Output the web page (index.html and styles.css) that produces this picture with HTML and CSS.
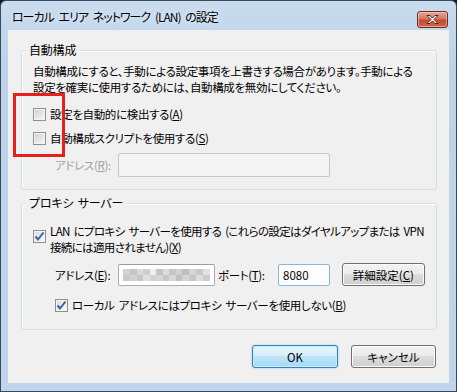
FILE: index.html
```html
<!DOCTYPE html>
<html lang="ja">
<head>
  <meta charset="UTF-8">
  <title>ローカル エリア ネットワーク (LAN) の設定</title>
  <link rel="stylesheet" href="styles.css">
</head>
<body>
  <div class="window">
    <div class="titlebar">
      <span class="title">ローカル エリア ネットワーク (LAN) の設定</span>
      <button class="close" aria-label="閉じる">
        <svg width="15" height="11" viewBox="0 0 15 11">
          <path d="M2 1.5h3l2.5 2.6 2.5-2.6h3l-4 4 4 4h-3l-2.5-2.6-2.5 2.6h-3l4-4z" fill="#fff" stroke="#5b1e12" stroke-width="1"/>
        </svg>
      </button>
    </div>

    <div class="client">
      <div class="group group-auto">
        <div class="group-title">自動構成</div>
        <p class="desc">自動構成にすると、手動による設定事項を上書きする場合があります。手動による<br>設定を確実に使用するためには、自動構成を無効にしてください。</p>
        <label class="check check-first"><span class="box"></span><span>設定を自動的に検出する(<u>A</u>)</span></label>
        <label class="check check-second"><span class="box"></span><span>自動構成スクリプトを使用する(<u>S</u>)</span></label>
        <div class="field-row field-script">
          <span class="field-label disabled">アドレス(<u>R</u>):</span>
          <span class="textbox textbox-disabled"></span>
        </div>
      </div>

      <div class="group group-proxy">
        <div class="group-title">プロキシ サーバー</div>
        <label class="check check-proxy">
          <span class="box checked">
            <svg width="11" height="11" viewBox="0 0 11 11"><path d="M1.5 5.5l2.5 3 5.5-7" fill="none" stroke="#3f5f9f" stroke-width="2"/></svg>
          </span>
          <span>LAN にプロキシ サーバーを使用する (これらの設定はダイヤルアップまたは VPN<br>接続には適用されません)(<u>X</u>)</span>
        </label>
        <div class="field-row field-proxy">
          <span class="field-label">アドレス(<u>E</u>):</span>
          <span class="textbox textbox-address"><span class="blur"></span></span>
          <span class="field-label port-label">ポート(<u>T</u>):</span>
          <span class="textbox textbox-port">8080</span>
          <button class="btn btn-advanced">詳細設定(<u>C</u>)</button>
        </div>
        <label class="check check-local">
          <span class="box checked">
            <svg width="11" height="11" viewBox="0 0 11 11"><path d="M1.5 5.5l2.5 3 5.5-7" fill="none" stroke="#3f5f9f" stroke-width="2"/></svg>
          </span>
          <span>ローカル アドレスにはプロキシ サーバーを使用しない(<u>B</u>)</span>
        </label>
      </div>

      <div class="actions">
        <button class="btn btn-default">OK</button>
        <button class="btn">キャンセル</button>
      </div>

      <div class="highlight"></div>
    </div>
  </div>
</body>
</html>
```

FILE: styles.css
```css
body {
  margin: 0;
  background: #10181f;
  font-family: "Noto Sans CJK JP", "Noto Sans", sans-serif;
  font-size: 11.5px;
  letter-spacing: -0.35px;
  word-spacing: 2px;
  font-feature-settings: "palt";
  color: #000;
}

.window {
  width: 457px;
  height: 392px;
  box-sizing: border-box;
  border: 1px solid #3c4a58;
  border-radius: 6px 6px 0 0;
  padding: 0 7px 8px;
  background: linear-gradient(#c9dcef, #bcd3ea 60px, #bed5ec);
}

.titlebar {
  height: 29px;
  display: flex;
  align-items: center;
  justify-content: space-between;
}

.title {
  font-size: 12px;
  letter-spacing: -1px;
  word-spacing: 3px;
  line-height: 16px;
  margin: 3px 0 0 4px;
  white-space: nowrap;
  text-shadow: 0 0 6px rgba(255, 255, 255, 0.9);
}

.close {
  width: 31px;
  height: 17px;
  margin: 7px 1px 0 0;
  padding: 0;
  border: 1px solid #6b2a1f;
  border-radius: 3px;
  background: linear-gradient(#e9a796, #d47660 45%, #c44a30 55%, #d2634a);
  box-shadow: inset 0 0 0 1px rgba(255, 220, 210, 0.55);
  display: flex;
  align-items: center;
  justify-content: center;
}

.client {
  position: relative;
  height: 353px;
  background: #f0f0f0;
  padding-top: 20px;
  box-sizing: border-box;
}

.group {
  margin: 0 12px 0 13px;
  border: 1px solid #d5dfe5;
  border-radius: 3px;
  padding: 0 11px;
  box-shadow: inset 1px 1px 0 #fff;
}

.group-title {
  width: fit-content;
  margin: -9px 0 0 -7px;
  padding: 0 3px;
  line-height: 16px;
  background: #f0f0f0;
  font-size: 12px;
  letter-spacing: -0.2px;
}

.group-auto {
  padding-bottom: 12px;
}

.group-proxy {
  margin-top: 13px;
  padding-bottom: 16px;
}

.desc {
  margin: 5px 0 0;
  line-height: 16px;
  white-space: nowrap;
}

.check {
  display: flex;
  align-items: flex-start;
  gap: 4px;
  line-height: 16px;
  white-space: nowrap;
}

.check-first { margin-top: 11px; }
.check-second { margin-top: 8px; }
.check-proxy { margin-top: 12px; letter-spacing: -0.65px; }
.check-local { margin: 11px 0 0 22px; }

.box {
  flex: none;
  width: 13px;
  height: 13px;
  box-sizing: border-box;
  margin-top: 2px;
  border: 1px solid #8e8f8f;
  background: linear-gradient(135deg, #cdd0d4, #f7f7f7);
  box-shadow: inset 0 0 0 1px #f4f4f4;
  display: flex;
  align-items: center;
  justify-content: center;
}

.check-proxy .box {
  margin-top: 7px;
}

.box.checked {
  background: linear-gradient(135deg, #d5d9e2, #fafbfd);
}

.field-row {
  display: flex;
  align-items: center;
  margin-left: 22px;
  white-space: nowrap;
}

.field-script {
  margin-top: 7px;
}

.field-proxy {
  margin-top: 8px;
}

.field-label {
  width: 63px;
  flex: none;
}

.disabled {
  color: #a0a0a0;
}

.port-label {
  width: 60px;
  margin-left: 3px;
}

.textbox {
  box-sizing: border-box;
  height: 22px;
  border: 1px solid #abadb3;
  border-top-color: #9a9ca2;
  border-radius: 2px;
  background: #fff;
  display: flex;
  align-items: center;
  padding: 0 4px;
}

.textbox-disabled {
  width: 212px;
  height: 24px;
  background: #f4f4f4;
  border-color: #c6c6c6;
}

.textbox-address {
  width: 97px;
}

.textbox-port {
  width: 53px;
  border-color: #87b6e3;
  line-height: 16px;
  letter-spacing: 0;
}

.blur {
  width: 88px;
  height: 12px;
  background:
    linear-gradient(90deg, #d6cfd3 0 7px, #c2c6c9 7px 14px, #d9dadb 14px 20px, #cdd0d0 20px 27px, #eef0ee 27px 33px, #c4c3c6 33px 40px, #dedbdc 40px 46px, #c8c4c4 46px 53px, #d3d0d2 53px 59px, #bcbec2 59px 66px, #d9d2d4 66px 73px, #c8c9cc 73px 80px, #e2e1e2 80px 88px) top / 100% 6px no-repeat,
    linear-gradient(90deg, #ccc8cb 0 7px, #d0d3d5 7px 14px, #c6c7c8 14px 20px, #e0e0de 20px 27px, #d2d2d4 27px 33px, #d8d5d6 33px 40px, #c9c6c8 40px 46px, #d9d6d6 46px 53px, #c2c0c4 53px 59px, #d3d4d8 59px 66px, #cbc4c8 66px 73px, #dcdde0 73px 80px, #cdcccf 80px 88px) bottom / 100% 6px no-repeat;
}

.btn {
  font: inherit;
  font-feature-settings: "palt";
  height: 23px;
  padding: 0;
  border: 1px solid #707070;
  border-radius: 3px;
  background: linear-gradient(#f2f2f2, #ebebeb 50%, #dddddd 50%, #cfcfcf);
  box-shadow: inset 0 0 0 1px #fcfcfc;
  color: #000;
}

.btn-advanced {
  width: 86px;
  margin-left: 12px;
}

.actions {
  display: flex;
  justify-content: flex-end;
  gap: 13px;
  margin: 15px 13px 0 0;
}

.actions .btn {
  width: 85px;
}

.actions .btn-default {
  width: 86px;
  border-color: #3c7fb1;
  background: linear-gradient(#e6f4fc, #d6eefb 50%, #bde4f9 50%, #a7d9f5);
  box-shadow: inset 0 0 0 1px #c8ecfc, 0 0 2px #7ec3ee;
}

.highlight {
  position: absolute;
  left: 5px;
  top: 63px;
  width: 52px;
  height: 64px;
  box-sizing: border-box;
  border: 3px solid #e6211b;
}
```
